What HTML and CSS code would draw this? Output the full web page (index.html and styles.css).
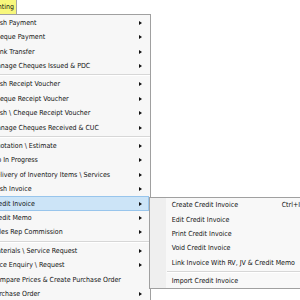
FILE: index.html
```html
<!DOCTYPE html>
<html>
<head>
<meta http-equiv="Content-Type" content="text/html; charset=utf-8"/>
<title>Accounting menu</title>
<link rel="stylesheet" href="styles.css">
</head>
<body>

<div class="menubar">
  <span class="tab"><span>Accounting</span></span>
</div>

<div class="menu main">
  <div class="item"><span>Cash Payment</span><i class="arrow"></i></div>
  <div class="item"><span>Cheque Payment</span><i class="arrow"></i></div>
  <div class="item"><span>Bank Transfer</span><i class="arrow"></i></div>
  <div class="item"><span>Manage Cheques Issued &amp; PDC</span><i class="arrow"></i></div>
  <div class="sep"></div>
  <div class="item"><span>Cash Receipt Voucher</span><i class="arrow"></i></div>
  <div class="item"><span>Cheque Receipt Voucher</span><i class="arrow"></i></div>
  <div class="item"><span>Cash \ Cheque Receipt Voucher</span><i class="arrow"></i></div>
  <div class="item"><span>Manage Cheques Received &amp; CUC</span><i class="arrow"></i></div>
  <div class="sep"></div>
  <div class="item"><span>Quotation \ Estimate</span><i class="arrow"></i></div>
  <div class="item"><span>Job In Progress</span><i class="arrow"></i></div>
  <div class="item"><span>Delivery of Inventory Items \ Services</span><i class="arrow"></i></div>
  <div class="item"><span>Cash Invoice</span><i class="arrow"></i></div>
  <div class="item active"><span>Credit Invoice</span><i class="arrow"></i></div>
  <div class="item"><span>Credit Memo</span><i class="arrow"></i></div>
  <div class="item"><span>Sales Rep Commission</span><i class="arrow"></i></div>
  <div class="sep"></div>
  <div class="item"><span>Materials \ Service Request</span><i class="arrow"></i></div>
  <div class="item"><span>Price Enquiry \ Request</span><i class="arrow"></i></div>
  <div class="item"><span>Compare Prices &amp; Create Purchase Order</span></div>
  <div class="item"><span>Purchase Order</span><i class="arrow"></i></div>
</div>

<!-- submenu of Credit Invoice -->
<div class="menu popup">
  <div class="item"><span>Create Credit Invoice</span><span class="key">Ctrl+I</span></div>
  <div class="item"><span>Edit Credit Invoice</span></div>
  <div class="item"><span>Print Credit Invoice</span></div>
  <div class="item"><span>Void Credit Invoice</span></div>
  <div class="item"><span>Link Invoice With RV, JV &amp; Credit Memo</span></div>
  <div class="sep"></div>
  <div class="item"><span>Import Credit Invoice</span></div>
</div>

</body>
</html>
```

FILE: styles.css
```css
body {
  margin: 0;
  height: 300px;
  overflow: hidden;
  position: relative;
  background-color: white;
  color: #111;
  font-family: "DejaVu Sans Condensed", "DejaVu Sans", sans-serif;
  font-stretch: condensed;
  font-size: 7px;
}

.menubar {
  display: flex;
  height: 14px;
}

/* only the end of the tab label is on screen */
.tab {
  display: flex;
  justify-content: flex-end;
  width: 17px;
  height: 14px;
  padding-right: 2px;
  line-height: 14px;
  box-sizing: border-box;
  overflow: hidden;
  white-space: nowrap;
  background-color: #f7f77c;
  border-right: 1px solid #a5a5a5;
}

.tab span {
  flex-shrink: 0;
}

.menu {
  background-color: #f7f7f7;
  border: 1px solid #a0a0a0;
}

.main {
  margin-left: -20px;
  width: 169px;
  padding-top: 0.5px;
}

.item {
  display: flex;
  align-items: center;
  justify-content: space-between;
  height: 14.45px;
  margin: 0 1px;
  padding: 0 7px 0 9.5px;
  white-space: nowrap;
}

.item.active {
  background-color: #cce4f7;
  box-shadow: inset 0 0 0 1px #98c5ec;
}

.arrow {
  width: 0;
  height: 0;
  border-left: 3px solid #111;
  border-top: 2.5px solid transparent;
  border-bottom: 2.5px solid transparent;
}

.sep {
  height: 1px;
  margin: 0.9px 0;
  background-color: #d7d7d7;
  border-bottom: 1px solid #fff;
}

/* submenu lies over the main menu */
.popup {
  position: absolute;
  left: 149px;
  top: 197px;
  width: 170px;
  background: linear-gradient(to right, #efefef 16px, #f8f8f8 16px);
}

.popup .item {
  display: grid;
  grid-template-columns: 110px auto;
  justify-content: start;
  height: 14.35px;
  margin: 0;
  padding-left: 21.7px;
}

.popup .sep {
  margin-left: 17px;
}
```
